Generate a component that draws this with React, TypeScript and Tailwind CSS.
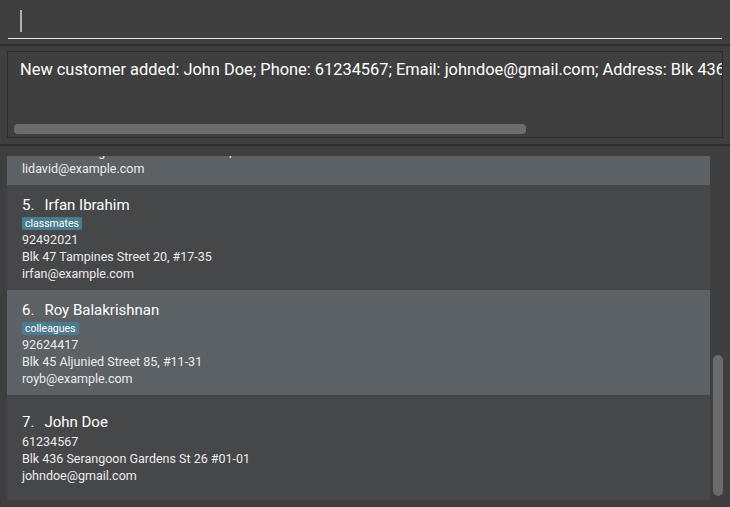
const people = [
  {
    id: 4,
    name: 'David Li',
    tags: ['family'],
    phone: '91031282',
    address: 'Blk 436 Serangoon Gardens Street 26, #16-43',
    email: 'lidavid@example.com',
  },
  {
    id: 5,
    name: 'Irfan Ibrahim',
    tags: ['classmates'],
    phone: '92492021',
    address: 'Blk 47 Tampines Street 20, #17-35',
    email: 'irfan@example.com',
  },
  {
    id: 6,
    name: 'Roy Balakrishnan',
    tags: ['colleagues'],
    phone: '92624417',
    address: 'Blk 45 Aljunied Street 85, #11-31',
    email: 'royb@example.com',
  },
  {
    id: 7,
    name: 'John Doe',
    tags: [] as string[],
    phone: '61234567',
    address: 'Blk 436 Serangoon Gardens St 26 #01-01',
    email: 'johndoe@gmail.com',
  },
];

const font = { fontFamily: 'Roboto, "Noto Sans", sans-serif' };

const App = () => {
  return (
    <div className="w-[730px] h-[507px] bg-[#3f3f3f] flex flex-col overflow-hidden" style={font}>
      {/* command box */}
      <div className="h-[44px] px-2 pt-[10px]">
        <div className="h-[29px] border-b border-[#e8e8e8] pl-3">
          <div className="w-[2px] h-[22px] bg-[#b0b0b0]" />
        </div>
      </div>
      <div className="h-[2px] bg-[#2f2f2f]" />

      {/* result display */}
      <div className="px-[7px] pt-[5px] pb-[6px]">
        <div className="h-[87px] border border-[#2c2c2c] flex flex-col overflow-hidden">
          <div className="flex-1 px-3 pt-[6px] whitespace-nowrap text-[16.4px] text-white leading-[24px]">
            New customer added: John Doe; Phone: 61234567; Email: johndoe@gmail.com; Address: Blk 436 Serangoon Gardens St 26 #01-01; Tags:
          </div>
          <div className="px-[6px] pb-[3px]">
            <div className="w-[512px] h-[10px] rounded-[4px] bg-[#6b6b6b]" />
          </div>
        </div>
      </div>
      <div className="h-[2px] bg-[#2f2f2f]" />

      {/* person list */}
      <div className="mt-[10px] mb-[7px] pl-[7px] pr-[7px] flex flex-1 gap-[3px] min-h-0">
        <div className="flex-1 overflow-hidden">
          <div className="-mt-[76px]">
            {people.map((p, i) => (
              <div
                key={p.id}
                className={`h-[105px] pl-[15px] flex flex-col justify-center ${
                  i % 2 === 0 ? 'bg-[#5c6165]' : 'bg-[#464749]'
                }`}
              >
                <div className="text-[15px] leading-[22px] text-white">
                  {p.id}.<span className="ml-[10px]">{p.name}</span>
                </div>
                {p.tags.length > 0 && (
                  <div className="flex gap-1 my-[1px]">
                    {p.tags.map((t) => (
                      <span
                        key={t}
                        className="px-[3px] rounded-[2px] bg-[#4b7b8f] text-white text-[10.5px] leading-[13px]"
                      >
                        {t}
                      </span>
                    ))}
                  </div>
                )}
                <div className="text-[12.5px] leading-[17px] text-[#ececec]">{p.phone}</div>
                <div className="text-[12.5px] leading-[17px] text-[#ececec]">{p.address}</div>
                <div className="text-[12.5px] leading-[17px] text-[#ececec]">{p.email}</div>
              </div>
            ))}
          </div>
        </div>
        <div className="w-[10px] flex flex-col justify-end pb-[4px]">
          <div className="h-[141px] rounded-[5px] bg-[#6b6b6b]" />
        </div>
      </div>
    </div>
  );
};

export default App;
